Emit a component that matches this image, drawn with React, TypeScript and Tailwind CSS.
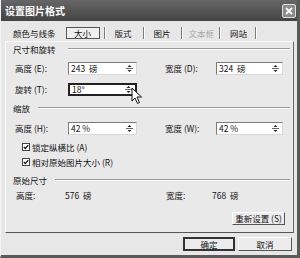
import React from 'react';

const font = "font-['Noto_Sans_CJK_SC',sans-serif]";

function Spin() {
  return (
    <svg width="9" height="11" viewBox="0 0 9 11" className="shrink-0">
      <path d="M4.5 2 L6.5 4 L2.5 4 Z" fill="#222" />
      <line x1="1" y1="5.5" x2="8" y2="5.5" stroke="#666" strokeWidth="1" />
      <path d="M2.5 7 L6.5 7 L4.5 9 Z" fill="#222" />
    </svg>
  );
}

function NumInput({ value, width, focused }: { value: string; width: string; focused?: boolean }) {
  return (
    <div
      className={
        'h-[13px] bg-white flex items-center justify-between pl-[2px] pr-[2px] ' +
        width +
        (focused
          ? ' border-2 border-[#222]'
          : ' border border-t-[#7a7a7a] border-l-[#7a7a7a] border-b-[#d8d8d8] border-r-[#d8d8d8]')
      }
    >
      <span className="text-[8.5px] leading-none text-[#111] whitespace-pre">{value}</span>
      <Spin />
    </div>
  );
}

function Section({ title, gap }: { title: string; gap: string }) {
  return (
    <div className="flex items-center h-[12px] pr-[3px]">
      <span className="text-[8.5px] leading-none text-[#111]">{title}</span>
      <div className={'flex-1 h-[2px] border-t border-[#9a9a9a] border-b border-b-white ' + gap} />
    </div>
  );
}

function Check({ label }: { label: string }) {
  return (
    <div className="flex items-center h-[12px] pl-[9px]">
      <span className="w-[8px] h-[8px] bg-white border border-[#444] flex items-center justify-center">
        <svg width="6" height="6" viewBox="0 0 6 6">
          <path d="M0.8 3 L2.4 4.6 L5.2 1.2" fill="none" stroke="#111" strokeWidth="1.3" />
        </svg>
      </span>
      <span className="ml-[2px] text-[8.5px] leading-none text-[#111] whitespace-pre">{label}</span>
    </div>
  );
}

function Sep() {
  return <div className="w-[2px] h-[12px] border-l border-[#7a7a7a] border-r border-r-white" />;
}

export default function App() {
  const tabs = [
    { name: '版式', before: 'ml-[9px]', after: 'ml-[11px]' },
    { name: '图片', before: 'ml-[9px]', after: 'ml-[10px]' },
    { name: '文本框', before: 'ml-[6px]', after: 'ml-[5px]', disabled: true },
    { name: '网站', before: 'ml-[9px]', after: 'ml-[8px]' },
  ];

  return (
    <div className={'relative w-[300px] h-[258px] bg-[#e7e7e7] flex flex-col border-l border-l-[#f4f4f4] border-r-[3px] border-r-[#5a5a5a] border-b-[3px] border-b-[#5a5a5a] ' + font}>
      {/* title bar */}
      <div className="h-[21px] shrink-0 flex items-center justify-between pl-[4px] pr-[1px] bg-linear-to-b from-[#666666] to-[#444444]">
        <span className="text-[10px] font-bold text-white leading-none">设置图片格式</span>
        <div className="w-[14px] h-[14px] rounded-[2px] border border-[#e0e0e0] bg-[#8a8a8a] flex items-center justify-center">
          <svg width="8" height="8" viewBox="0 0 8 8">
            <path d="M1 1 L7 7 M7 1 L1 7" stroke="white" strokeWidth="1.8" />
          </svg>
        </div>
      </div>

      <div className="flex-1 flex flex-col pl-[4px] pr-[3px]">
        {/* tabs */}
        <div className="h-[20px] shrink-0 flex items-center pt-[4px] text-[8.5px] leading-none text-[#111]">
          <span className="ml-[8px]">颜色与线条</span>
          <div className="ml-[10px] w-[34px] h-[12px] border border-[#555] bg-[#efefef] flex items-center justify-center">
            大小
          </div>
          <div className="ml-[4px]">
            <Sep />
          </div>
          {tabs.map((t) => (
            <React.Fragment key={t.name}>
              <span className={t.before + (t.disabled ? ' text-[#a8a8a8]' : '')}>{t.name}</span>
              <div className={t.after}>
                <Sep />
              </div>
            </React.Fragment>
          ))}
        </div>

        {/* panel */}
        <div className="h-[192px] shrink-0 flex flex-col pl-[7px] border-t border-t-[#fafafa] border-l border-l-[#fafafa] border-r border-r-[#6a6a6a] border-b border-b-[#555] bg-[#e9e9e9] text-[8.5px] leading-none text-[#111]">
          <div className="mt-[1px]">
            <Section title="尺寸和旋转" gap="ml-[12px]" />
          </div>

          <div className="mt-[7px] flex items-center pl-[2px]">
            <span className="w-[53px] whitespace-pre">高度 (E):</span>
            <NumInput value="243  磅" width="w-[69px]" />
            <span className="ml-[28px] w-[51px] whitespace-pre">宽度 (D):</span>
            <NumInput value="324  磅" width="w-[67px]" />
          </div>

          <div className="mt-[8px] flex items-center pl-[2px]">
            <span className="w-[53px] whitespace-pre">旋转 (T):</span>
            <NumInput value="18°" width="w-[69px]" focused />
          </div>

          <div className="mt-[6px]">
            <Section title="缩放" gap="ml-[8px]" />
          </div>

          <div className="mt-[8px] flex items-center pl-[2px]">
            <span className="w-[53px] whitespace-pre">高度 (H):</span>
            <NumInput value="42 %" width="w-[69px]" />
            <span className="ml-[28px] w-[51px] whitespace-pre">宽度 (W):</span>
            <NumInput value="42 %" width="w-[67px]" />
          </div>

          <div className="mt-[6px]">
            <Check label="锁定纵横比 (A)" />
          </div>
          <div className="mt-[3px]">
            <Check label="相对原始图片大小 (R)" />
          </div>

          <div className="mt-[6px]">
            <Section title="原始尺寸" gap="ml-[8px]" />
          </div>

          <div className="mt-[3px] h-[12px] flex items-center pl-[3px]">
            <span className="w-[49px]">高度:</span>
            <span className="w-[101px] whitespace-pre">576  磅</span>
            <span className="w-[46px]">宽度:</span>
            <span className="whitespace-pre">768  磅</span>
          </div>

          <div className="mt-[11px] flex justify-end pr-[8px]">
            <button className="w-[53px] h-[13px] flex items-center justify-center bg-[#ececec] border border-t-white border-l-white border-b-[#555] border-r-[#555] text-[8.5px] leading-none whitespace-pre">
              重新设置 (S)
            </button>
          </div>
        </div>

        {/* dialog buttons */}
        <div className="mt-[4px] flex justify-end pr-[2px] gap-[3px] text-[8.5px] leading-none text-[#111]">
          <button className="w-[52px] h-[14px] flex items-center justify-center bg-[#ececec] border-2 border-[#333]">
            确定
          </button>
          <button className="w-[54px] h-[14px] flex items-center justify-center bg-[#ececec] border border-t-white border-l-white border-b-[#555] border-r-[#555]">
            取消
          </button>
        </div>
      </div>

      {/* mouse pointer over the spinner */}
      <svg className="absolute left-[130px] top-[87px]" width="12" height="18" viewBox="0 0 12 18">
        <path d="M1 1 L1 14 L4 11 L6.5 16.5 L8.5 15.5 L6 10 L10.5 10 Z" fill="white" stroke="#111" strokeWidth="1" strokeLinejoin="round" />
      </svg>
    </div>
  );
}
